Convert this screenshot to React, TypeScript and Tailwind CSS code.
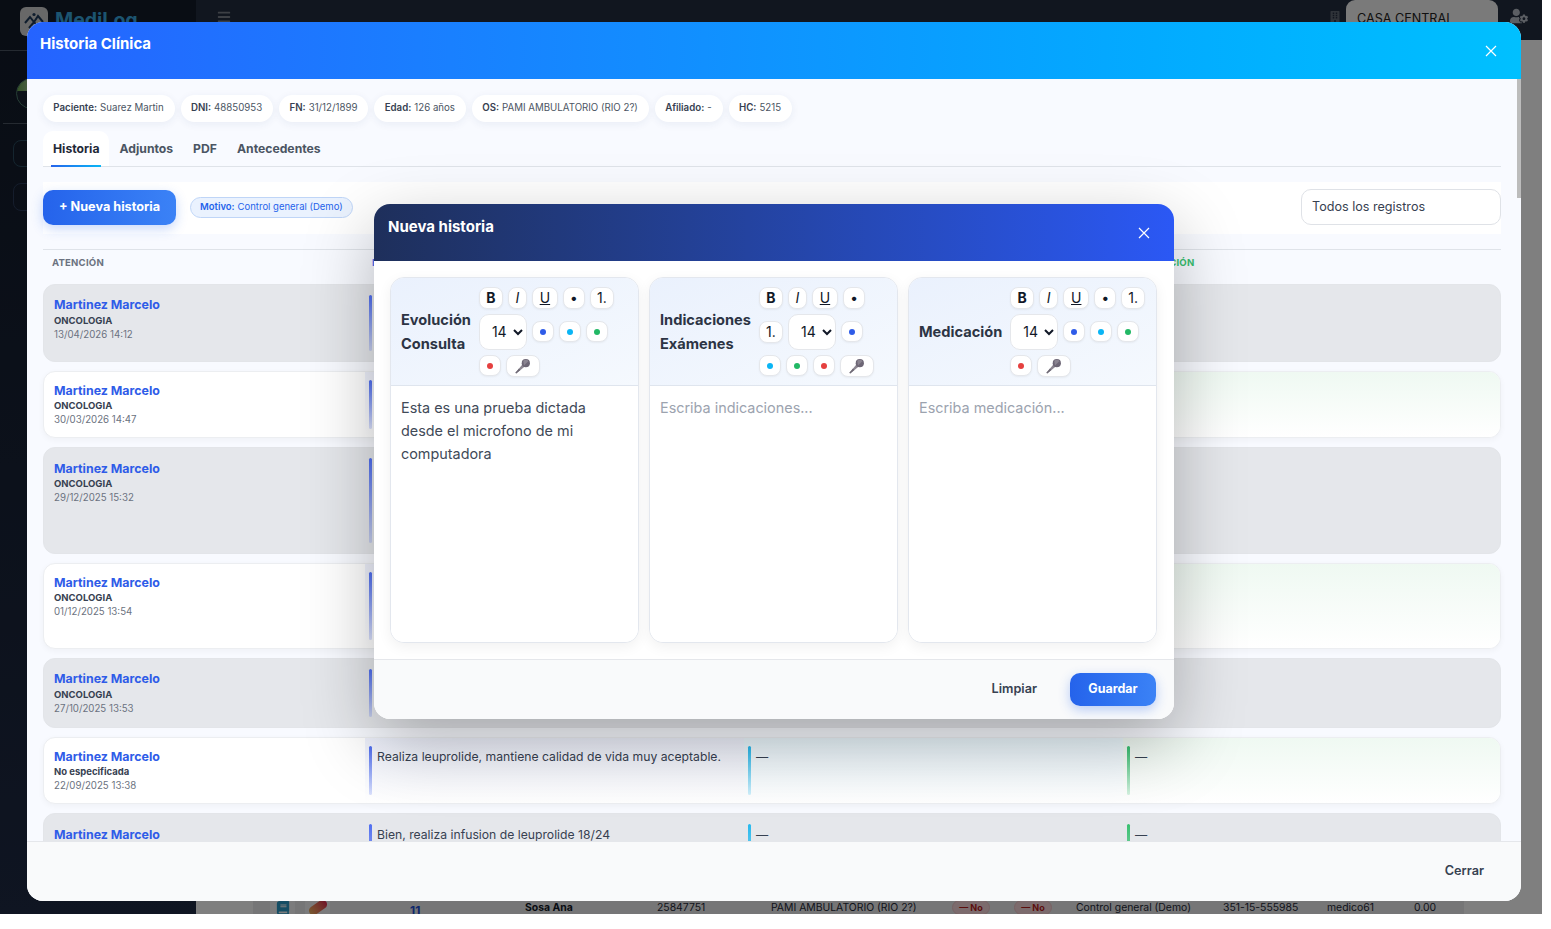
import React from "react";
import { FaBars, FaBook, FaBuilding, FaUserCog } from "react-icons/fa";

function CloseX() {
  return (
    <svg width="12" height="12" viewBox="0 0 12 12" fill="none" stroke="white" strokeWidth="1.2">
      <path d="M1 1 L11 11 M11 1 L1 11" />
    </svg>
  );
}

function Mic() {
  return (
    <svg width="18" height="18" viewBox="0 0 18 18">
      <path d="M2.2 16.6 L1.4 15.8 L8.6 7.2 L10.8 9.4 Z" fill="#8d8792" />
      <path d="M2.2 16.6 L1.4 15.8 L5 11.6 L6.4 13 Z" fill="#6f6a76" />
      <circle cx="11.8" cy="6.2" r="4.1" fill="#6d6675" />
      <path d="M9.2 3.8 A4 4 0 0 1 14.6 4 L10 8.6 Z" fill="#a39da8" opacity="0.55" />
    </svg>
  );
}

function TB({ w, children, className }: { w: string; children: React.ReactNode; className?: string }) {
  return (
    <button
      className={`${w} h-[22px] rounded-[8px] border border-[#e5e7eb] bg-white flex items-center justify-center text-[14px] text-[#111827] shadow-[0_1px_2px_rgba(0,0,0,0.05)] ${className ?? ""}`}
    >
      {children}
    </button>
  );
}

function Dot({ c }: { c: string }) {
  return (
    <button className="w-[22px] h-[21px] rounded-[8px] border border-[#e5e7eb] bg-white flex items-center justify-center shadow-[0_1px_2px_rgba(0,0,0,0.05)]">
      <span className={`w-[6px] h-[6px] rounded-full ${c}`} />
    </button>
  );
}

const B = () => <TB w="w-[24px]" className="font-bold">B</TB>;
const I = () => <TB w="w-[19px]" className="italic">I</TB>;
const U = () => <TB w="w-[26px]" className="underline">U</TB>;
const Bul = () => <TB w="w-[22px]" className="font-bold">•</TB>;
const Num = () => <TB w="w-[24px]">1.</TB>;
const Size = () => (
  <select
    defaultValue="14"
    className="w-[48px] h-[36px] rounded-[10px] border border-[#e5e7eb] bg-white pl-[8px] text-[14px] text-[#111827]"
  >
    <option>14</option>
  </select>
);
const MicB = () => (
  <button className="w-[34px] h-[22px] rounded-[8px] border border-[#e5e7eb] bg-white flex items-center justify-center shadow-[0_1px_2px_rgba(0,0,0,0.05)]">
    <Mic />
  </button>
);
const Blue = () => <Dot c="bg-[#2f5ce8]" />;
const Cyan = () => <Dot c="bg-[#0ab5f5]" />;
const Green = () => <Dot c="bg-[#22b865]" />;
const Red = () => <Dot c="bg-[#e5403f]" />;

function Editor({
  label,
  toolbar,
  placeholder,
  value,
}: {
  label: React.ReactNode;
  toolbar: React.ReactNode;
  placeholder: string;
  value?: string;
}) {
  return (
    <div className="w-[249px] shrink-0 flex flex-col rounded-[14px] border border-[#e3e7ee] bg-white overflow-hidden shadow-[0_4px_14px_rgba(0,0,0,0.06)]">
      <div className="h-[108px] shrink-0 flex items-center gap-[8px] pl-[10px] pr-[10px] border-b border-[#dfe5ee] bg-gradient-to-br from-[#eaf1fd] to-[#f5f9fe]">
        <div className="shrink-0 text-[14.6px] leading-[24px] font-bold text-[#2c3444]">{label}</div>
        <div className="flex-1 min-w-0 flex flex-wrap items-center gap-x-[5px] gap-y-[5px]">{toolbar}</div>
      </div>
      <textarea
        readOnly
        placeholder={placeholder}
        defaultValue={value}
        className="flex-1 resize-none outline-none px-[10px] pt-[10px] text-[14.4px] leading-[23px] text-[#414a58] placeholder:text-[#9ca3af] bg-white"
      />
    </div>
  );
}

const chips = [
  ["Paciente:", "Suarez Martin"],
  ["DNI:", "48850953"],
  ["FN:", "31/12/1899"],
  ["Edad:", "126 años"],
  ["OS:", "PAMI AMBULATORIO (RIO 2?)"],
  ["Afiliado:", "-"],
  ["HC:", "5215"],
];

type Row = {
  gray: boolean;
  h: string;
  pt: string;
  py: string;
  gap: string;
  spec?: string;
  date?: string;
  evo: string;
};

const rows: Row[] = [
  { gray: true, h: "h-[78px]", pt: "pt-[12px]", py: "py-[10px]", gap: "mt-[1px]", spec: "ONCOLOGIA", date: "13/04/2026 14:12", evo: "" },
  { gray: false, h: "h-[67px]", pt: "pt-[11px]", py: "py-[8px]", gap: "mt-0", spec: "ONCOLOGIA", date: "30/03/2026 14:47", evo: "" },
  { gray: true, h: "h-[107px]", pt: "pt-[13px]", py: "py-[10px]", gap: "mt-0", spec: "ONCOLOGIA", date: "29/12/2025 15:32", evo: "" },
  { gray: false, h: "h-[86px]", pt: "pt-[11px]", py: "py-[8px]", gap: "mt-0", spec: "ONCOLOGIA", date: "01/12/2025 13:54", evo: "" },
  { gray: true, h: "h-[70px]", pt: "pt-[12px]", py: "py-[10px]", gap: "mt-[1px]", spec: "ONCOLOGIA", date: "27/10/2025 13:53", evo: "" },
  { gray: false, h: "h-[67px]", pt: "pt-[11px]", py: "py-[8px]", gap: "mt-0", spec: "No especificada", date: "22/09/2025 13:38", evo: "Realiza leuprolide, mantiene calidad de vida muy aceptable." },
  { gray: true, h: "h-[86px]", pt: "pt-[13px]", py: "py-[10px]", gap: "mt-0", evo: "Bien, realiza infusion de leuprolide 18/24" },
];

function Cell({ text, py, bar, tint }: { text: string; py: string; bar: string; tint: string }) {
  return (
    <div className={`flex gap-[5px] pl-[4px] ${py} ${tint}`}>
      <span className={`w-[3px] shrink-0 rounded-full bg-gradient-to-b ${bar}`} />
      <span className="text-[12.2px] leading-[22px] text-[#374151]">{text}</span>
    </div>
  );
}

function HistRow({ r }: { r: Row }) {
  const tint = (c: string) => (r.gray ? "" : c);
  return (
    <div
      className={`${r.h} shrink-0 grid grid-cols-[321px_379px_379px_377px] rounded-[12px] overflow-hidden border ${
        r.gray ? "bg-[#e5e7eb] border-[#e3e5e9]" : "bg-white border-[#eceef1] shadow-[0_2px_6px_rgba(0,0,0,0.04)]"
      }`}
    >
      <div className={`pl-[10px] ${r.pt}`}>
        <div className="text-[12.4px] leading-[16px] font-bold text-[#2f5ce8]">Martinez Marcelo</div>
        {r.spec && <div className={`text-[9.5px] leading-[14px] font-bold text-[#374151] ${r.gap}`}>{r.spec}</div>}
        {r.date && <div className="text-[9.7px] leading-[14px] text-[#6b7280]">{r.date}</div>}
      </div>
      <Cell text={r.evo} py={r.py} bar="from-[#4f6ef0] to-[#4f6ef0]/20" tint={tint("bg-gradient-to-b from-[#eef1fc] to-white")} />
      <Cell text="—" py={r.py} bar="from-[#25b9ee] to-[#25b9ee]/20" tint={tint("bg-gradient-to-b from-[#eaf6fc] to-white")} />
      <Cell text="—" py={r.py} bar="from-[#37c070] to-[#37c070]/20" tint={tint("bg-gradient-to-b from-[#eff9f2] to-white")} />
    </div>
  );
}

export default function App() {
  return (
    <div className="relative w-[1542px] h-[914px] overflow-hidden flex [font-family:Inter,sans-serif] bg-white">
      {/* Underlying page */}
      <aside className="w-[196px] shrink-0 bg-gradient-to-b from-[#121a28] to-[#1e2a44] flex flex-col">
        <div className="h-[51px] shrink-0 border-b border-[#4b5563] flex items-start gap-[7px] pl-[20px] pt-[7px]">
          <div className="w-[28px] h-[29px] rounded-[6px] bg-[#d0d0d0] flex items-center justify-center">
            <svg width="22" height="22" viewBox="0 0 22 22" fill="none" stroke="#1f3a5a" strokeWidth="2">
              <path d="M2 12 L7 6 L11 11 L15 5 L20 11 M6 17 L11 11 L16 17" />
              <circle cx="11" cy="3.5" r="1.6" fill="#1f3a5a" stroke="none" />
            </svg>
          </div>
          <span className="text-[19.5px] leading-[26px] font-bold text-[#38a8e0]">MediLog</span>
        </div>
        <div className="h-[73px] shrink-0 mx-[3px] border-b border-[#4b5563] pt-[27px] pl-[13px]">
          <div className="w-[31px] h-[31px] rounded-full border border-[#4b7a6a] overflow-hidden bg-[#1a2433]">
            <div className="w-full h-[12px] bg-gradient-to-r from-[#6aa84f] to-[#d6d6d6]" />
          </div>
        </div>
        <div className="pl-[13px] pt-[16px] flex flex-col gap-[16px]">
          <div className="w-[40px] h-[27px] rounded-[8px] border border-[#2a4a5e]" />
          <div className="w-[40px] h-[28px] rounded-[8px] border border-[#2a3a58]" />
        </div>
      </aside>
      <main className="flex-1 min-w-0 flex flex-col bg-white">
        <header className="h-[40px] shrink-0 bg-[#222c3e] flex items-start pt-[10px] pl-[21px] pr-[14px]">
          <FaBars className="text-[#7b808a] text-[14px]" />
          <div className="flex-1" />
          <FaBuilding className="text-[#5f6672] text-[12px] mt-[1px] mr-[5px]" />
          <div className="w-[152px] h-[40px] -mt-[10px] rounded-t-[9px] bg-[#f4f4f4] pl-[11px] pt-[11px] text-[12.6px] leading-[16px] text-[#222]">
            CASA CENTRAL
          </div>
          <FaUserCog className="text-[#b6bcc6] text-[18px] ml-[12px] -mt-[3px]" />
        </header>
        <div className="flex-1 min-h-0 flex flex-col justify-end">
          <div className="ml-[57px] mr-[78px] h-[24px] -mb-[5px] bg-[#ececee] pl-[17px] grid grid-cols-[140px_115px_132px_114px_181px_62px_62px_147px_104px_87px_50px] items-center text-[10.4px] text-[#1f2937]">
            <div className="flex gap-[10px]">
              <span className="w-[25px] h-[25px] rounded-[8px] bg-white/70 flex items-center justify-center">
                <FaBook className="text-[#2a9bc9] text-[14px]" />
              </span>
              <span className="w-[25px] h-[25px] rounded-[8px] bg-white/70 flex items-center justify-center">
                <span className="w-[20px] h-[9px] rounded-full bg-gradient-to-r from-[#f0b060] to-[#e0204f] -rotate-[35deg]" />
              </span>
            </div>
            <span className="text-[12px] font-bold text-[#1d4ed8] pt-[6px]">11</span>
            <span className="font-bold text-[#111827]">Sosa Ana</span>
            <span>25847751</span>
            <span>PAMI AMBULATORIO (RIO 2?)</span>
            <span className="w-[38px] text-center rounded-full bg-[#f8d7da] text-[9px] font-bold text-[#b91c1c] border border-[#efc4c8]">— No</span>
            <span className="w-[38px] text-center rounded-full bg-[#f8d7da] text-[9px] font-bold text-[#b91c1c] border border-[#efc4c8]">— No</span>
            <span>Control general (Demo)</span>
            <span>351-15-555985</span>
            <span>medico61</span>
            <span>0.00</span>
          </div>
        </div>
      </main>

      {/* Backdrop */}
      <div className="absolute inset-0 bg-black/50" />

      {/* Historia Clínica modal */}
      <div className="absolute left-[27px] top-[22px] w-[1494px] h-[879px] rounded-[16px] overflow-hidden bg-[#f8faff] flex flex-col">
        <div className="h-[57px] shrink-0 bg-gradient-to-r from-[#2563ff] to-[#00c0ff] flex items-start justify-between pl-[13px] pr-[24px]">
          <h2 className="text-[15px] leading-[20px] mt-[12px] font-bold text-white">Historia Clínica</h2>
          <span className="mt-[23px]"><CloseX /></span>
        </div>

        <div className="flex-1 min-h-0 overflow-hidden px-[16px] pt-[16px]">
          <div className="flex gap-[6px]">
            {chips.map(([k, v]) => (
              <div key={k} className="h-[27px] rounded-full bg-white pl-[10.3px] pr-[11px] pb-[1px] flex items-center gap-[3px] text-[9.7px] text-[#4b5563] shadow-[0_2px_8px_rgba(30,60,120,0.07)]">
                <b className="font-semibold text-[#374151]">{k}</b>
                <span>{v}</span>
              </div>
            ))}
          </div>

          <div className="mt-[9px] h-[36px] border-b border-[#dfe3e9] flex items-stretch w-[1458px] text-[12.2px] font-bold text-[#4b5563]">
            <div className="relative px-[10px] pt-[9px] bg-white rounded-t-[10px] text-[#1f2937]">
              Historia
              <span className="absolute left-[8px] right-[8px] bottom-[-1px] h-[2px] bg-gradient-to-r from-[#2563eb] to-[#0ab5f5]" />
            </div>
            <div className="px-[10px] pt-[9px]">Adjuntos</div>
            <div className="px-[10px] pt-[9px]">PDF</div>
            <div className="px-[10px] pt-[9px]">Antecedentes</div>
          </div>

          <div className="mt-[15px] h-[52px] w-[1458px] bg-white flex items-center pb-[1px]">
            <button className="w-[133px] h-[35px] rounded-[10px] bg-gradient-to-r from-[#2563eb] to-[#3b82f6] text-[12.7px] font-bold pb-[1px] text-white shadow-[0_4px_12px_rgba(37,99,235,0.25)]">
              + Nueva historia
            </button>
            <div className="ml-[14px] h-[21px] rounded-full border border-[#bfd5f7] bg-[#eaf2fe] px-[9px] flex items-center gap-[3px] text-[9.5px] text-[#2563eb]">
              <b className="font-semibold">Motivo:</b>
              <span>Control general (Demo)</span>
            </div>
            <div className="flex-1" />
            <div className="w-[200px] h-[36px] mb-[2px] rounded-[10px] border border-[#dfe2e7] bg-white pl-[10px] pt-[2px] flex items-center text-[12.6px] text-[#374151]">
              Todos los registros
            </div>
          </div>

          <div className="mt-[15px] w-[1458px] h-[35px] border-t border-[#dfe3e9] grid grid-cols-[321px_379px_379px_379px] items-center text-[9.6px] font-bold tracking-[0.02em] pb-[8px]">
            <span className="pl-[9px] text-[#6b7280]">ATENCIÓN</span>
            <span className="pl-[8px] text-[#4f6ef0]">EVOLUCIÓN</span>
            <span className="pl-[8px] text-[#25b9ee]">INDICACIONES</span>
            <span className="pl-[8px] text-[#37c070]">MEDICACIÓN</span>
          </div>

          <div className="w-[1458px] flex flex-col gap-[9px]">
            {rows.map((r, i) => (
              <HistRow key={i} r={r} />
            ))}
          </div>
        </div>

        <div className="h-[60px] shrink-0 border-t border-[#e5e7eb] bg-[#f9fafb] flex items-center justify-end pr-[37px] pb-[2px] text-[12.7px] font-semibold text-[#374151]">
          Cerrar
        </div>

        {/* scrollbar */}
        <div className="absolute right-0 top-[57px] w-[4px] h-[119px] bg-[#bcbcbc]" />
      </div>

      {/* Nueva historia modal */}
      <div className="absolute left-[374px] top-[204px] w-[800px] h-[515px] rounded-[16px] overflow-hidden bg-white flex flex-col shadow-[0_24px_70px_rgba(0,0,0,0.28)]">
        <div className="h-[57px] shrink-0 bg-gradient-to-r from-[#1e2f5b] to-[#2b58f5] flex items-start justify-between pl-[14px] pr-[24px]">
          <h3 className="text-[15px] leading-[20px] mt-[13px] font-bold text-white">Nueva historia</h3>
          <span className="mt-[23px]"><CloseX /></span>
        </div>
        <div className="flex-1 min-h-0 flex gap-[10px] pl-[16px] pt-[16px] pb-[16px]">
          <Editor
            label={<>Evolución<br />Consulta</>}
            placeholder="Escriba evolución..."
            value={"Esta es una prueba dictada\ndesde el microfono de mi\ncomputadora"}
            toolbar={<><B /><I /><U /><Bul /><Num /><Size /><Blue /><Cyan /><Green /><Red /><MicB /></>}
          />
          <Editor
            label={<>Indicaciones<br />Exámenes</>}
            placeholder="Escriba indicaciones..."
            toolbar={<><B /><I /><U /><Bul /><Num /><Size /><Blue /><Cyan /><Green /><Red /><MicB /></>}
          />
          <Editor
            label="Medicación"
            placeholder="Escriba medicación..."
            toolbar={<><B /><I /><U /><Bul /><Num /><Size /><Blue /><Cyan /><Green /><Red /><MicB /></>}
          />
        </div>
        <div className="h-[60px] shrink-0 border-t border-[#e5e7eb] bg-[#f9fafb] flex items-center justify-end gap-[33px] pr-[18px]">
          <span className="text-[12.7px] font-semibold text-[#374151] pb-[2px]">Limpiar</span>
          <button className="w-[86px] h-[33px] rounded-[10px] bg-gradient-to-r from-[#2563eb] to-[#3b82f6] text-[12.5px] font-bold text-white shadow-[0_4px_12px_rgba(37,99,235,0.3)]">
            Guardar
          </button>
        </div>
      </div>
    </div>
  );
}
